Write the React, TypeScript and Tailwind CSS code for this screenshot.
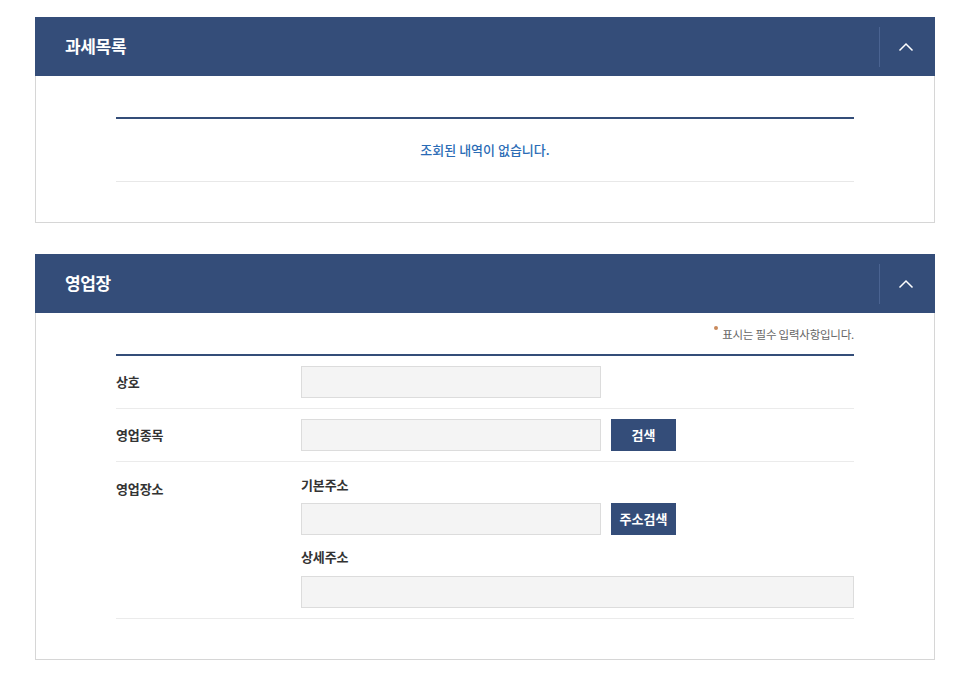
import React from "react";

const font = { fontFamily: '"Noto Sans CJK KR", "Noto Sans", sans-serif' };

function Header({ title }: { title: string }) {
  return (
    <div className="flex h-[59px] items-center bg-[#344d79]">
      <div className="flex-1 pb-[2px] pl-[30px] text-[17px] font-bold tracking-[-0.02em] text-white">{title}</div>
      <div className="h-[40px] w-px bg-[#4a6391]" />
      <div className="flex w-[55px] items-center justify-center pr-[4px]">
        <svg width="16" height="10" viewBox="0 0 16 10">
          <polyline points="1.5,8.5 8,2 14.5,8.5" fill="none" stroke="white" strokeWidth="1.5" />
        </svg>
      </div>
    </div>
  );
}

function Input({ className = "" }: { className?: string }) {
  return <div className={`h-[32px] border border-[#dcdcdc] bg-[#f4f4f4] ${className}`} />;
}

function Btn({ children }: { children: React.ReactNode }) {
  return (
    <div className="flex h-[32px] w-[65px] items-center justify-center bg-[#344d79] text-[13px] font-bold text-white">
      {children}
    </div>
  );
}

const label = "text-[13px] font-bold tracking-[-0.01em] text-[#333]";

export default function App() {
  return (
    <div className="min-h-[678px] bg-white pl-[35px] pt-[17px]" style={font}>
      <div className="w-[900px]">
        <Header title="과세목록" />
        <div className="border-x border-b border-[#d6d6d6] px-[80px] pt-[41px] pb-[40px]">
          <div className="flex h-[65px] items-center justify-center border-t-2 border-b border-t-[#344d79] border-b-[#e8e8e8] text-[13px] font-medium text-[#2b6cb6]">
            조회된 내역이 없습니다.
          </div>
        </div>
      </div>

      <div className="mt-[31px] w-[900px]">
        <Header title="영업장" />
        <div className="border-x border-b border-[#d6d6d6] px-[80px] pt-[11px] pb-[40px]">
          <div className="mb-[10px] flex justify-end text-[11.5px] leading-[20px] tracking-[-0.02em] text-[#666]">
            <span className="relative mr-[4px] top-[-6px] h-[4px] w-[4px] self-center rounded-full bg-[#c98a5c]" />
            표시는 필수 입력사항입니다.
          </div>
          <div className="border-t-2 border-[#344d79]">
            <div className="flex items-center border-b border-[#ebebeb] py-[10px]">
              <div className={`w-[185px] ${label}`}>상호</div>
              <Input className="w-[300px]" />
            </div>
            <div className="flex items-center border-b border-[#ebebeb] py-[10px]">
              <div className={`w-[185px] ${label}`}>영업종목</div>
              <Input className="w-[300px]" />
              <div className="ml-[10px]">
                <Btn>검색</Btn>
              </div>
            </div>
            <div className="flex border-b border-[#ebebeb] pt-[13px] pb-[10px]">
              <div className={`w-[185px] pt-[4px] leading-[20px] ${label}`}>영업장소</div>
              <div className="flex-1">
                <div className={`mb-[8px] leading-[20px] ${label}`}>기본주소</div>
                <div className="flex">
                  <Input className="w-[300px]" />
                  <div className="ml-[10px]">
                    <Btn>주소검색</Btn>
                  </div>
                </div>
                <div className={`mt-[12px] mb-[9px] leading-[20px] ${label}`}>상세주소</div>
                <Input className="w-full" />
              </div>
            </div>
          </div>
        </div>
      </div>
    </div>
  );
}
